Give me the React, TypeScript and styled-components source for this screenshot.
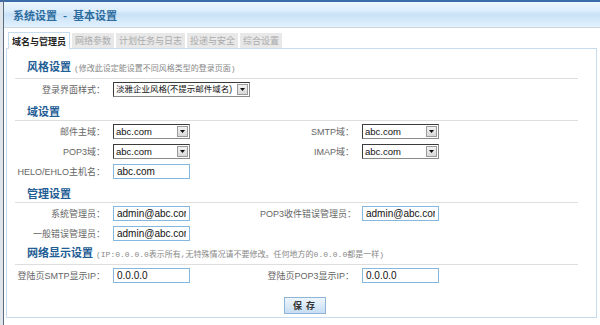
import React from 'react'
import styled, { createGlobalStyle } from 'styled-components'

const GlobalStyle = createGlobalStyle`
  body {
    margin: 0;
    background: #fff;
    font-family: "Liberation Sans", "Noto Sans CJK SC", sans-serif;
    font-size: 9px;
    color: #666;
  }
`

const Page = styled.div`
  display: flex;
  width: 600px;
  min-height: 325px;
  background: #fff;
`

const LeftRail = styled.div`
  width: 3px;
  background: linear-gradient(#3a6aa8 0 2px, #dfe5ea 2px);
  border-right: 1px solid #5d6d7d;
`

const Main = styled.div`
  flex: 1;
  display: flex;
  flex-direction: column;
`

const TitleBar = styled.div`
  height: 25px;
  border-top: 2px solid #3a6aa8;
  border-bottom: 1px solid #cfd8e0;
  background: linear-gradient(
    #ecf6ff 0%,
    #dcedfc 35%,
    #c9e1f6 50%,
    #d3e8fa 70%,
    #e2f1fe 100%
  );
  display: flex;
  align-items: center;
  padding-left: 9px;
  font-family: "Noto Sans CJK SC", sans-serif;
  font-size: 11px;
  font-weight: 700;
  color: #2d6c9e;
`

const Dash = styled.span`
  margin: 0 6px;
`

const Body = styled.div`
  padding: 4px 0 0 2px;
`

const TabBar = styled.div`
  display: flex;
  gap: 2px;
  padding-left: 2px;
  height: 16px;
  position: relative;
  z-index: 1;
`

const Tab = styled.div<{ $active?: boolean }>`
  height: 16px;
  box-sizing: border-box;
  padding: 0 3px;
  display: flex;
  align-items: center;
  font-family: "Noto Sans CJK SC", sans-serif;
  font-size: 9px;
  ${({ $active }) =>
    $active
      ? `
    background: #fff;
    color: #222;
    font-weight: 700;
    border: 1px solid #c7dbee;
    border-bottom: none;
    height: 17px;
  `
      : `
    background: #e8e8e8;
    color: #ababab;
    margin-top: 1px;
    height: 15px;
  `}
`

const Panel = styled.div`
  width: 591px;
  box-sizing: border-box;
  border: 1px solid #c7dbee;
  padding: 8px 18px 3px 8px;
`

const Heading = styled.div`
  height: 22px;
  box-sizing: border-box;
  border-bottom: 1px solid #dedede;
  display: flex;
  align-items: flex-end;
  padding: 0 0 2px 12px;
  line-height: 14px;
`

const HeadingText = styled.span`
  font-family: "Noto Sans CJK SC", sans-serif;
  font-size: 11px;
  font-weight: 700;
  color: #1f5d95;
`

const Note = styled.span`
  font-family: "Liberation Mono", "Noto Sans CJK SC", monospace;
  font-size: 8px;
  color: #888;
  margin-left: 3px;
`

const Row = styled.div`
  display: grid;
  grid-template-columns: 98px 147px 102px 1fr;
  height: 20px;
  align-items: center;
`

const Label = styled.div`
  text-align: right;
  padding-right: 8px;
  white-space: nowrap;
  color: #666;
`

const Field = styled.div<{ $span?: number }>`
  display: flex;
  align-items: center;
  ${({ $span }) => ($span ? `grid-column: span ${$span};` : '')}
`

const SelectBox = styled.div<{ $width: number }>`
  width: ${({ $width }) => $width}px;
  height: 15px;
  box-sizing: border-box;
  display: flex;
  align-items: center;
  border: 1px solid #8a8a8a;
  border-top-color: #3c3c3c;
  border-left-color: #3c3c3c;
  background: #fff;
`

const SelectValue = styled.span<{ $size: number }>`
  flex: 1;
  overflow: hidden;
  white-space: nowrap;
  padding-left: 2px;
  font-family: "Liberation Sans", "Noto Sans CJK SC", sans-serif;
  font-size: ${({ $size }) => $size}px;
  color: #111;
  line-height: 13px;
`

const ArrowButton = styled.span`
  width: 11px;
  height: 11px;
  margin-right: 1px;
  box-sizing: border-box;
  border: 1px solid #9a9a9a;
  background: linear-gradient(#f2f2f2, #d8d8d8);
  display: flex;
  align-items: center;
  justify-content: center;
`

const TextInput = styled.input`
  width: 77px;
  height: 15px;
  box-sizing: border-box;
  border: 1px solid #86b7de;
  padding: 0 3px;
  font-family: "Liberation Sans", sans-serif;
  font-size: 10px;
  color: #111;
  outline: none;
  background: #fff;
`

const ButtonRow = styled.div`
  display: flex;
  justify-content: center;
  padding-left: 16px;
  margin-top: 12px;
`

const SaveButton = styled.button`
  width: 42px;
  height: 17px;
  border: 1px solid #8fb4d8;
  background: linear-gradient(#eef6fd, #c6ddf3);
  font-family: "Noto Sans CJK SC", sans-serif;
  font-size: 9px;
  font-weight: 700;
  color: #333;
  padding: 0;
  letter-spacing: 1px;
`

const Select = ({
  value,
  width = 77,
  size = 9.5,
}: {
  value: string
  width?: number
  size?: number
}) => (
  <SelectBox $width={width}>
    <SelectValue $size={size}>{value}</SelectValue>
    <ArrowButton>
      <svg width="5" height="3" viewBox="0 0 5 3">
        <path d="M0 0h5L2.5 3z" fill="#111" />
      </svg>
    </ArrowButton>
  </SelectBox>
)

const tabs = ['域名与管理员', '网络参数', '计划任务与日志', '投递与安全', '综合设置']

export default function App() {
  return (
    <Page>
      <GlobalStyle />
      <LeftRail />
      <Main>
        <TitleBar>
          系统设置<Dash>-</Dash>基本设置
        </TitleBar>
        <Body>
          <TabBar>
            {tabs.map((t, i) => (
              <Tab key={t} $active={i === 0}>
                {t}
              </Tab>
            ))}
          </TabBar>
          <Panel>
            <Heading>
              <div>
                <HeadingText>风格设置</HeadingText>
                <Note>(修改此设定能设置不同风格类型的登录页面)</Note>
              </div>
            </Heading>
            <Row>
              <Label>登录界面样式：</Label>
              <Field $span={2}>
                <Select value="淡雅企业风格(不提示邮件域名)" width={137} size={8.5} />
              </Field>
            </Row>

            <Heading>
              <HeadingText>域设置</HeadingText>
            </Heading>
            <Row>
              <Label>邮件主域：</Label>
              <Field>
                <Select value="abc.com" />
              </Field>
              <Label>SMTP域：</Label>
              <Field>
                <Select value="abc.com" />
              </Field>
            </Row>
            <Row>
              <Label>POP3域：</Label>
              <Field>
                <Select value="abc.com" />
              </Field>
              <Label>IMAP域：</Label>
              <Field>
                <Select value="abc.com" />
              </Field>
            </Row>
            <Row>
              <Label>HELO/EHLO主机名：</Label>
              <Field>
                <TextInput defaultValue="abc.com" />
              </Field>
            </Row>

            <Heading>
              <HeadingText>管理设置</HeadingText>
            </Heading>
            <Row>
              <Label>系统管理员：</Label>
              <Field>
                <TextInput defaultValue="admin@abc.com" />
              </Field>
              <Label>POP3收件错误管理员：</Label>
              <Field>
                <TextInput defaultValue="admin@abc.com" />
              </Field>
            </Row>
            <Row>
              <Label>一般错误管理员：</Label>
              <Field>
                <TextInput defaultValue="admin@abc.com" />
              </Field>
            </Row>

            <Heading>
              <div>
                <HeadingText>网络显示设置</HeadingText>
                <Note>(IP:0.0.0.0表示所有,无特殊情况请不要修改。任何地方的0.0.0.0都是一样)</Note>
              </div>
            </Heading>
            <Row>
              <Label>登陆页SMTP显示IP：</Label>
              <Field>
                <TextInput defaultValue="0.0.0.0" />
              </Field>
              <Label>登陆页POP3显示IP：</Label>
              <Field>
                <TextInput defaultValue="0.0.0.0" />
              </Field>
            </Row>

            <ButtonRow>
              <SaveButton>保 存</SaveButton>
            </ButtonRow>
          </Panel>
        </Body>
      </Main>
    </Page>
  )
}
